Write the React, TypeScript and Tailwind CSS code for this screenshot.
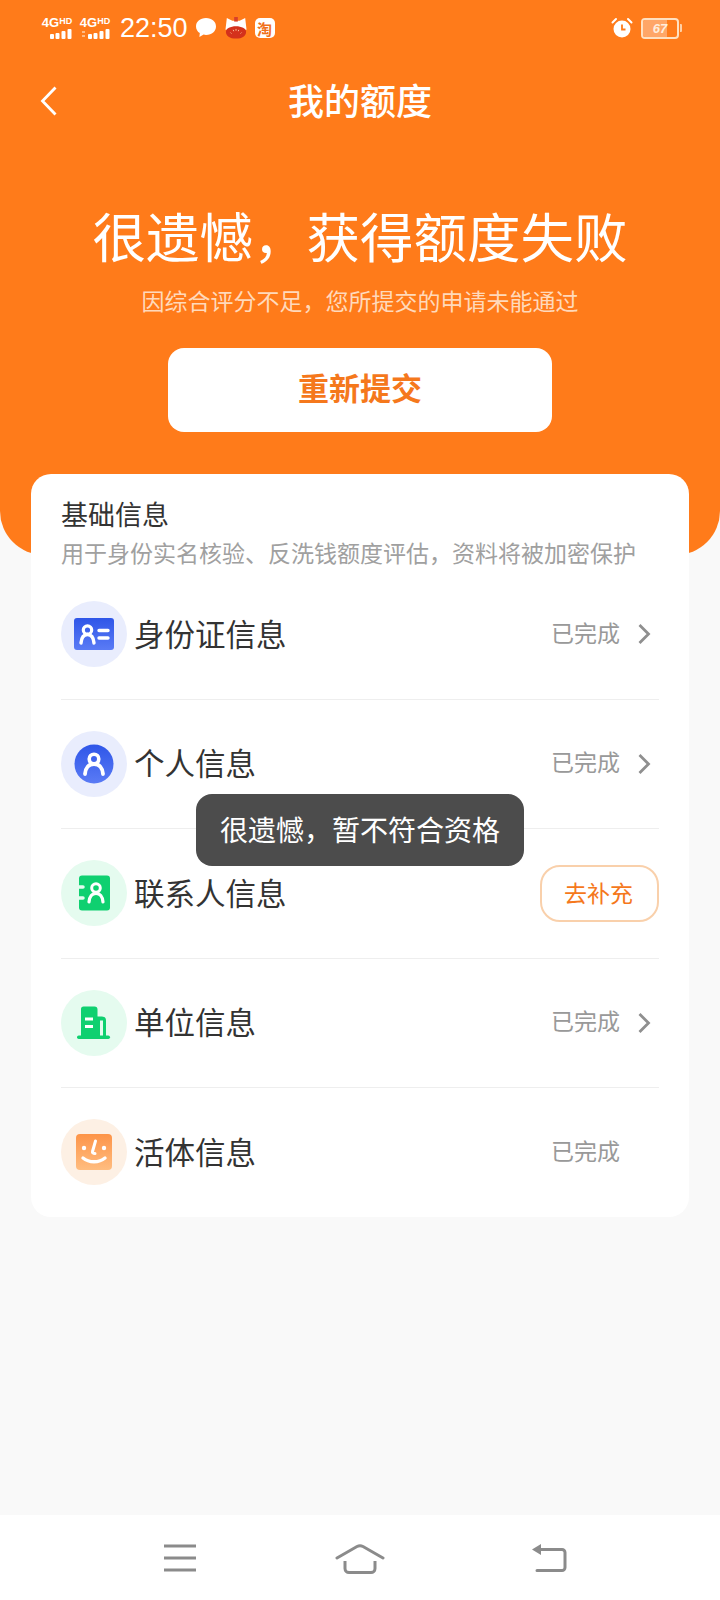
const CJK = "font-['Noto_Sans_CJK_SC','Noto_Sans',sans-serif]";

function Signal({ extra }: { extra?: boolean }) {
  return (
    <div className="flex w-[32px] flex-col items-center">
      <div className="flex h-[11px] items-start font-['Liberation_Sans',sans-serif] font-bold leading-[11px] text-white">
        <span className="text-[13px]">4G</span>
        <span className="text-[9px] leading-[9px]">HD</span>
      </div>
      <svg width="32" height="10" viewBox="0 0 32 10" className="mt-[1px]">
        {extra && <path d="M3 3h3M3 7h3" stroke="#ffd0a6" strokeWidth="1.5" />}
        <rect x="9" y="5" width="4" height="5" rx="1" fill="#fff" />
        <rect x="14.500" y="4" width="4" height="6" rx="1" fill="#fff" />
        <rect x="20.500" y="2" width="4" height="8" rx="1" fill="#fff" />
        <rect x="26.500" y="0" width="4" height="10" rx="1" fill="#fff" />
      </svg>
    </div>
  );
}

function StatusBar() {
  return (
    <div className="flex h-[56px] items-center justify-between pl-[41px] pr-[38px]">
      <div className="flex items-center">
        <Signal />
        <div className="ml-[6px]">
          <Signal extra />
        </div>
        <span className="ml-[9px] font-['Liberation_Sans',sans-serif] text-[27px] leading-none text-white">22:50</span>
        <svg width="22" height="20" viewBox="0 0 22 20" className="ml-[7px]">
          <path d="M11 0C5 0 1 3.6 1 8.4c0 2.8 1.5 5.2 3.8 6.7L4.4 19l4.2-2.4c.8.2 1.6.3 2.4.3 6 0 10-3.8 10-8.5S17 0 11 0z" fill="#fff" />
        </svg>
        <svg width="22" height="22" viewBox="0 0 24 24" className="ml-[8px]">
          <path d="M2 1l6 3h8l6-3 1.500 13H.5z" fill="#fff" />
          <rect x="10" y="0" width="4" height="5" fill="#d8402a" />
          <path d="M1 16c0-3.500 5-6 11-6s11 2.500 11 6c0 4.500-4 7.500-11 7.500S1 20.500 1 16z" fill="#d4311c" />
          <path d="M6 17l1 1M12 13v2M18 17l-1 1M9 14l.5 1.500M15 14l-.5 1.500" stroke="#ffc9a0" strokeWidth="1" />
        </svg>
        <div className={`ml-[8px] flex h-[20px] w-[20px] items-center justify-center rounded-[5px] bg-white text-[15px] font-bold leading-none text-[#f0701a] ${CJK}`}>
          淘
        </div>
      </div>
      <div className="flex items-center">
        <svg width="22" height="22" viewBox="0 0 22 22">
          <circle cx="11" cy="12" r="8.500" fill="#fff" />
          <path d="M1.500 5.500L5 2M20.500 5.500L17 2" stroke="#fff" strokeWidth="2" strokeLinecap="round" />
          <path d="M11 7.500V12.500H14.500" fill="none" stroke="#ff7b1a" strokeWidth="1.800" />
        </svg>
        <div className="relative ml-[8px] flex h-[21px] w-[38px] items-center overflow-hidden rounded-[4px] border-2 border-[#ffe0c0]">
          <div className="h-full w-[24px] bg-[#ffa667]" />
          <span className="absolute inset-0 flex items-center justify-center font-['Liberation_Sans',sans-serif] text-[13px] font-bold italic leading-none text-[#ffeedd]">
            67
          </span>
        </div>
        <div className="ml-[1px] h-[8px] w-[2px] rounded-r-[1px] bg-[#ffd0a6]" />
      </div>
    </div>
  );
}

function IdIcon() {
  return (
    <svg width="40" height="32" viewBox="0 0 40 32">
      <defs>
        <linearGradient id="blueA" x1="0" y1="0" x2="0" y2="1">
          <stop offset="0" stopColor="#2f56e8" />
          <stop offset="1" stopColor="#5a7bf5" />
        </linearGradient>
      </defs>
      <rect width="40" height="32" rx="3" fill="url(#blueA)" />
      <circle cx="13.500" cy="12" r="4.200" fill="none" stroke="#fff" strokeWidth="3.200" />
      <path d="M7 25c.500-5.500 3-8.500 6.500-8.500s6 3 6.500 8.500" fill="none" stroke="#fff" strokeWidth="3.400" strokeLinecap="round" />
      <path d="M25 12.500h9M25 20h9" stroke="#fff" strokeWidth="3.400" strokeLinecap="round" />
    </svg>
  );
}

function PersonIcon() {
  return (
    <svg width="40" height="40" viewBox="0 0 40 40">
      <defs>
        <linearGradient id="blueB" x1="0" y1="0" x2="0" y2="1">
          <stop offset="0" stopColor="#2f56e8" />
          <stop offset="1" stopColor="#5a7bf5" />
        </linearGradient>
      </defs>
      <circle cx="20" cy="20" r="19.500" fill="url(#blueB)" />
      <circle cx="20" cy="15" r="4.800" fill="none" stroke="#fff" strokeWidth="3.600" />
      <path d="M11 30c.500-6.500 4-10 9-10s8.500 3.500 9 10" fill="none" stroke="#fff" strokeWidth="3.800" strokeLinecap="round" />
    </svg>
  );
}

function ContactIcon() {
  return (
    <svg width="36" height="36" viewBox="0 0 36 36">
      <rect x="3" y="0.500" width="31" height="35" rx="3" fill="#0fd070" />
      <path d="M0 12h7M0 23h7" stroke="#e5fbef" strokeWidth="3.500" strokeLinecap="round" />
      <circle cx="20" cy="13" r="4.300" fill="none" stroke="#fff" strokeWidth="3" />
      <path d="M13 27c.500-5.500 3-8.500 7-8.500s6.500 3 7 8.500" fill="none" stroke="#fff" strokeWidth="3.200" strokeLinecap="round" />
    </svg>
  );
}

function OfficeIcon() {
  return (
    <svg width="34" height="34" viewBox="0 0 34 34">
      <path d="M4 3a2.500 2.500 0 0 1 2.500-2.500h11a3 3 0 0 1 3 3V31H4z" fill="#0fd070" />
      <path d="M20 10.500h5a4 4 0 0 1 4 4V31h-9z" fill="#0fd070" />
      <rect x="0" y="29.500" width="33" height="3.500" rx="1.700" fill="#0fd070" />
      <path d="M8 13h8M8 20.500h8" stroke="#fff" strokeWidth="3" />
      <rect x="23" y="14.500" width="3" height="15" fill="#e5fbef" />
    </svg>
  );
}

function FaceIcon() {
  return (
    <svg width="36" height="36" viewBox="0 0 36 36">
      <defs>
        <linearGradient id="orangeA" x1="0" y1="0" x2="0" y2="1">
          <stop offset="0" stopColor="#fd9448" />
          <stop offset="1" stopColor="#ffbd80" />
        </linearGradient>
      </defs>
      <rect width="36" height="36" rx="4" fill="url(#orangeA)" />
      <path d="M19.500 7l-3 10.500c-.300 1.200.500 2 2.500 2" fill="none" stroke="#fff" strokeWidth="3" strokeLinecap="round" />
      <circle cx="8" cy="14" r="2.200" fill="#fff" />
      <circle cx="28" cy="14" r="2.200" fill="#fff" />
      <path d="M7 24c6 5 16 5 22 0" fill="none" stroke="#fff" strokeWidth="3.400" strokeLinecap="round" />
    </svg>
  );
}

function Chevron() {
  return (
    <svg width="14" height="22" viewBox="0 0 14 22">
      <path d="M2.500 2L11.500 11L2.500 20" fill="none" stroke="#8f8f8f" strokeWidth="2.800" />
    </svg>
  );
}

const rows = [
  { label: "身份证信息", bg: "bg-[#e9edfd]", icon: <IdIcon />, state: "done" },
  { label: "个人信息", bg: "bg-[#e9edfd]", icon: <PersonIcon />, state: "done" },
  { label: "联系人信息", bg: "bg-[#e5fbef]", icon: <ContactIcon />, state: "todo" },
  { label: "单位信息", bg: "bg-[#e5fbef]", icon: <OfficeIcon />, state: "done" },
  { label: "活体信息", bg: "bg-[#fdf0e4]", icon: <FaceIcon />, state: "final" },
];

export default function App() {
  return (
    <div className={`relative flex min-h-[1600px] w-full flex-col bg-[#f9f9f9] ${CJK}`}>
      {/* Orange head */}
      <div className="h-[555px] rounded-b-[44px] bg-[#ff7b1a]">
        <StatusBar />
        <div className="relative mt-[17px] flex h-[56px] items-center justify-center">
          <svg width="18" height="30" viewBox="0 0 18 30" className="absolute left-[40px] top-[13px]">
            <path d="M15.500 1.500L2.500 15L15.500 28.500" fill="none" stroke="#fff" strokeWidth="2.800" />
          </svg>
          <h1 className="pb-[4px] text-[36px] font-medium leading-none text-white">我的额度</h1>
        </div>
        <h2 className="mt-[72px] text-center text-[53.500px] leading-[68px] text-white">很遗憾，获得额度失败</h2>
        <p className="mt-[15px] text-center text-[23px] leading-[32px] text-[#ffd9bb]">因综合评分不足，您所提交的申请未能通过</p>
        <div className="mx-auto mt-[32px] flex h-[84px] w-[384px] items-center justify-center rounded-[16px] bg-white pb-[5px] text-[31px] font-bold text-[#f5781c]">
          重新提交
        </div>
      </div>

      {/* Info card */}
      <div className="mx-[31px] -mt-[81px] rounded-[20px] bg-white px-[30px] pt-[22px]">
        <h3 className="text-[27px] leading-[36px] text-[#333333]">基础信息</h3>
        <p className="mt-[3px] text-[23px] leading-[35px] text-[#a0a0a0]">用于身份实名核验、反洗钱额度评估，资料将被加密保护</p>
        {rows.map((row, index) => (
          <div
            key={index}
            className={`flex items-center ${index < rows.length - 1 ? "h-[129.500px] border-b border-[#eeeeee]" : "h-[128.500px]"}`}
          >
            <div className={`flex h-[66px] w-[66px] shrink-0 items-center justify-center rounded-full ${row.bg}`}>{row.icon}</div>
            <span className="ml-[7px] flex-1 pb-[3px] text-[30.500px] leading-none text-[#333333]">{row.label}</span>
            {row.state === "todo" ? (
              <div className="flex h-[57px] w-[119px] items-center justify-center rounded-[20px] border-2 border-[#f9d0ab] pb-[2px] pr-[2px] text-[23px] text-[#f5781c]">
                去补充
              </div>
            ) : (
              <div className="flex w-[108px] items-center">
                <span className="pb-[4px] text-[23px] leading-none text-[#999999]">已完成</span>
                {row.state === "done" && (
                  <div className="ml-[17px] flex">
                    <Chevron />
                  </div>
                )}
              </div>
            )}
          </div>
        ))}
      </div>

      <div className="flex-1" />

      {/* System nav */}
      <div className="h-[85px] bg-white">
        <div className="flex h-full items-start pl-[162px] pt-[28px]">
          <svg width="36" height="30" viewBox="0 0 36 30">
            <path d="M2 3h32M2 15h32M2 27h32" stroke="#8b8b8b" strokeWidth="3" />
          </svg>
          <svg width="50" height="32" viewBox="0 0 50 32" className="ml-[137px]">
            <path d="M2 15L22 3.500Q25 2 28 3.500L48 15" fill="none" stroke="#8b8b8b" strokeWidth="3" strokeLinecap="round" />
            <path d="M10 18v7.500a4 4 0 0 0 4 4h22a4 4 0 0 0 4-4V18" fill="none" stroke="#8b8b8b" strokeWidth="3" />
          </svg>
          <svg width="36" height="30" viewBox="0 0 36 30" className="ml-[146px]">
            <path d="M1 6.500L10 1v11z" fill="#8b8b8b" />
            <path d="M8 6.500h23a3 3 0 0 1 3 3v15a3 3 0 0 1-3 3H6" fill="none" stroke="#8b8b8b" strokeWidth="3" strokeLinecap="round" />
          </svg>
        </div>
      </div>

      {/* Toast */}
      <div className="absolute left-[196px] top-[794px] flex h-[72px] w-[328px] items-center justify-center rounded-[16px] bg-[#4c4c4c] pb-[3px] text-[28px] leading-none text-white">
        很遗憾，暂不符合资格
      </div>
    </div>
  );
}
